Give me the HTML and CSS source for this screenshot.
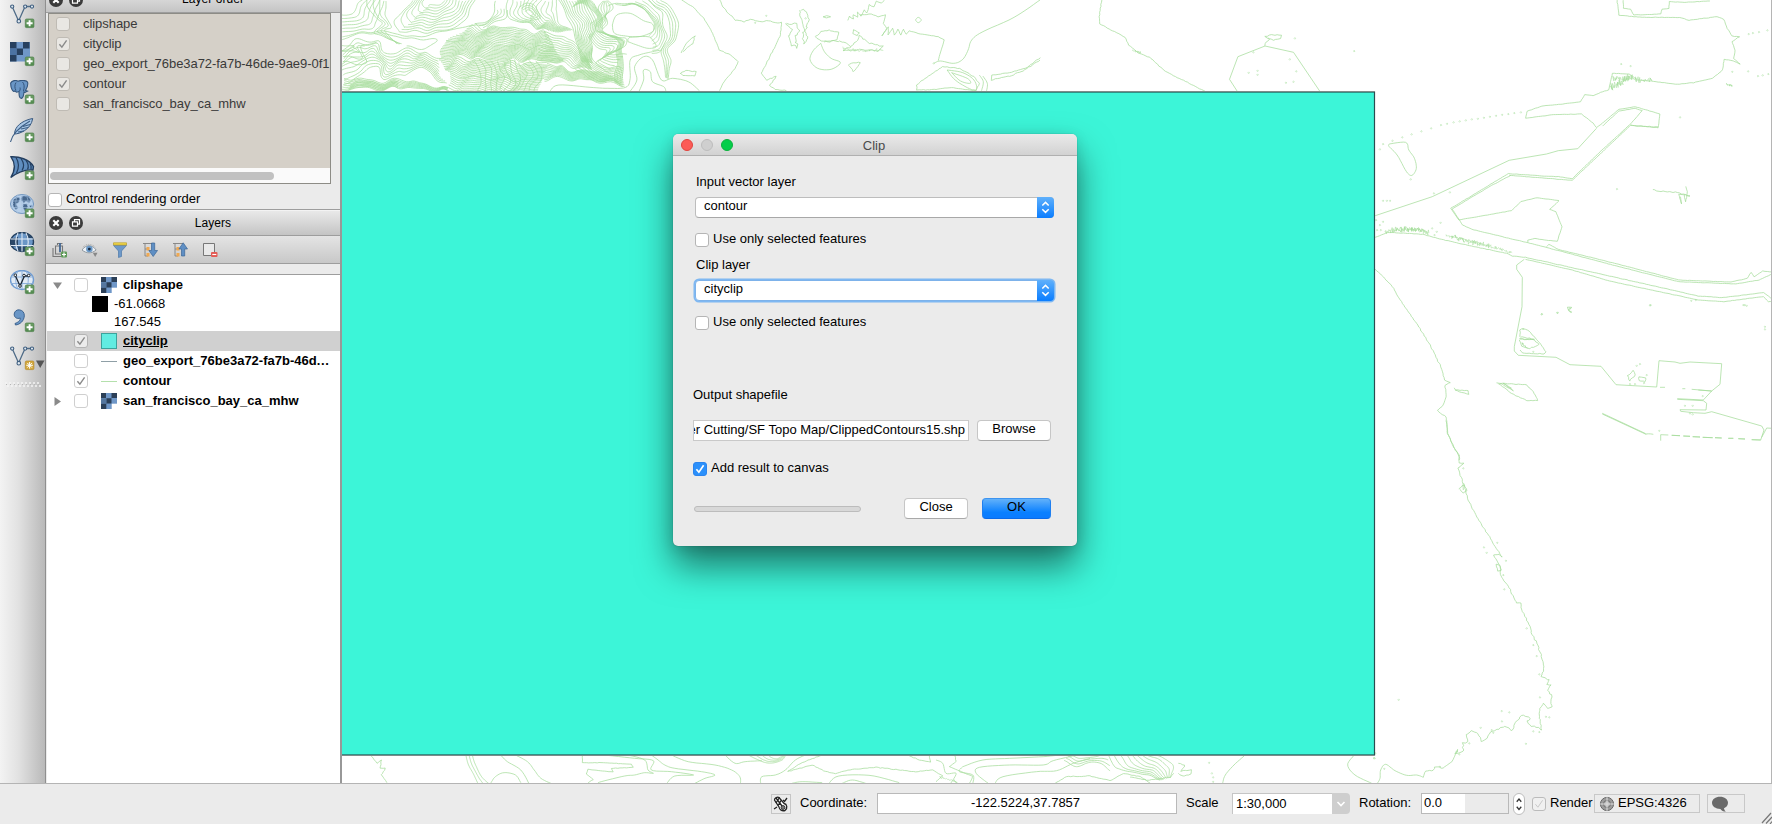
FILE: index.html
```html
<!DOCTYPE html>
<html lang="en">
<head>
<meta charset="utf-8">
<title>Clip</title>
<link rel="stylesheet" href="styles.css">
</head>
<body>
<svg class="defs" width="0" height="0">
  <defs>
    <linearGradient id="badgeGreen" x1="0" y1="0" x2="0" y2="1"><stop offset="0" stop-color="#6f9f68"/><stop offset="1" stop-color="#4f8a4c"/></linearGradient>
    <g id="plus"><rect x="15.3" y="15" width="8.6" height="8.6" rx="1.2" fill="url(#badgeGreen)" stroke="#4d7f4a" stroke-width=".7"/><path d="M19.6 16.3v6M16.6 19.3h6" stroke="#fff" stroke-width="1.9"/></g>
    <g id="vee"><path d="M2.6 3.6 8.6 17 14.6 3.6M15.5 2.5h5" fill="none" stroke="#4f6b87" stroke-width="1.3"/><g fill="#dfe8f0" stroke="#3f5f80" stroke-width="1.1"><circle cx="2.2" cy="2.6" r="1.6"/><circle cx="8.8" cy="17.2" r="1.8"/><circle cx="15.2" cy="2.6" r="1.6"/><circle cx="22" cy="2.6" r="1.6"/></g></g>
    <g id="raster"><path fill="#6f97c8" d="M0 0h16v16H0z"/><path fill="#2b3f57" d="M0 0h5v5H0zM10.500 0H16v5h-5.500zM5.300 5.300h5.200v5.200H5.300zM0 10.500h5.300V16H0z"/><path fill="#55779f" d="M0 5.300h5.300v5.200H0z"/><path fill="#fff" d="M10.700 10.700H16V16h-5.300z"/></g>
    <g id="tick"><path d="M3.400 7.200 5.900 10.200 10.600 3.300" fill="none"/></g>
    <g id="closeDock"><circle cx="7" cy="7" r="7" fill="#3b3b3b"/><path d="M4.300 4.300l5.400 5.400M9.700 4.300 4.300 9.700" stroke="#fff" stroke-width="2.100"/></g>
    <g id="floatDock"><circle cx="7" cy="7" r="7" fill="#3b3b3b"/><path d="M5.500 5.300V3.600h5v4.600H9M3.500 5.800h5v4.300h-5z" fill="none" stroke="#fff" stroke-width="1.200"/></g>
    <g id="updown"><path d="M5.300 8.500 8.500 5.400 11.700 8.500M5.300 12.300 8.500 15.400 11.700 12.300" fill="none" stroke="#fff" stroke-width="1.500"/></g>
  </defs>
</svg>

<div class="app">
  <div class="workspace">
    <nav class="toolbar">
      <svg class="tool" viewBox="0 0 25 25"><use href="#vee" x="0" y="0"/><use href="#plus"/></svg>
      <svg class="tool" viewBox="0 0 25 25"><path fill="#6f97c8" d="M0 0h20v19.500H0z"/><path fill="#27405f" d="M0 0h6.500v6.500H0zM13 0h6.500v6.500H13zM6.500 6.500H13V13H6.500zM0 13h6.500v6.500H0z"/><path fill="#4c73a3" d="M0 6.500h6.500V13H0z"/><use href="#plus"/></svg>
      <svg class="tool" viewBox="0 0 25 25"><path d="M.7 3C2 .2 6 0 8 1.200 11 0 16 0 17.500 2c1 3-.5 6-2 8.500l2 .7-2.500 1.200-1-.5c-.3 3-.5 6-2.500 6.500-2.500.2-2.500-4-2.500-7-1.500 1-3.500 1-4-.5C3 13 .5 8 .7 3z" fill="#6a96c6" stroke="#34557c" stroke-width="1.100"/><path d="M6 2.500C4.500 5 4.500 8 6 10.500M12.500 2c2 2 2 5 1 9M9 11.500c1-1 1.500-2 1-4" fill="none" stroke="#34557c" stroke-width="1"/><use href="#plus"/></svg>
      <svg class="tool" viewBox="0 0 25 25"><path d="M22.700.5C15 2 7 6 5 13l-.5 3C9 16 21 12 22.700.5z" fill="#a9c7e6" stroke="#34557c" stroke-width="1"/><path d="M.5 24C2 17 8 10 20 3M8 14l6-1M11 11l7-1.500M13 8.500l7-2" fill="none" stroke="#3d5f86" stroke-width="1.100"/><use href="#plus"/></svg>
      <svg class="tool" viewBox="0 0 25 25"><path d="M1 .8C9 .5 19 3 23.500 10.500L23 14C15 13 8 16 .8 21.500 5.500 14 5.500 7 1 .8z" fill="#5f8dbf" stroke="#243f60" stroke-width="1.400"/><path d="M6 1.500C9.500 7 9 12 6.500 17M11 2.500c3.500 5 3 9 1 12M16 4.500c3 4 2.500 7 1.500 9M20 7.500c1.500 2 1.500 4 1 6" fill="none" stroke="#243f60" stroke-width="1.200"/><use href="#plus"/></svg>
      <svg class="tool" viewBox="0 0 25 25"><ellipse cx="12" cy="10" rx="11.500" ry="9.500" fill="#b7cfe9" stroke="#6e93bd"/><path d="M3 6l4-3 3 1-1 4-3 2 2 4-2 2-3-4zM12 2l6 0 3 4-2 3-3-2-2 2-3-3zM13 10l4 0 1 3-3 4-2-3zM19 12l3-1-1 3z" fill="#47678c" stroke="#9bb8da" stroke-width="1" stroke-dasharray="1.500 1"/><path d="M12 .5v19M.8 7h22.500M1 13.500h22.500M8 1C5 6 5 14 8 19M16 1c3 5 3 13 0 18" fill="none" stroke="#a8c4e2" stroke-width=".6"/><use href="#plus"/></svg>
      <svg class="tool" viewBox="0 0 25 25"><ellipse cx="12" cy="10" rx="11.500" ry="9.500" fill="#6a96c6" stroke="#24405f" stroke-width="1.400"/><path d="M1.500 6.500 8 5v9.500H2A9 9 0 0 1 1.500 6.500zM8 14.500h9V19H8zM16 1.500c4 1 6 4 6 4.500h-5z" fill="#2a4768"/><path d="M12 .5v19M.8 7h22.500M1 13.500h22.500M8 1C5 6 5 14 8 19M16 1c3 5 3 13 0 18" fill="none" stroke="#dfe9f4" stroke-width="1.100"/><use href="#plus"/></svg>
      <svg class="tool" viewBox="0 0 25 25"><ellipse cx="12" cy="10" rx="11.500" ry="9.500" fill="#e2ebf5" stroke="#6f9bd0" stroke-width="1.400"/><path d="M12 .5v19M.8 7h22.500M1 13.500h22.500M8 1C5 6 5 14 8 19M16 1c3 5 3 13 0 18" fill="none" stroke="#86abd9" stroke-width=".9"/><path d="M5.500 6 10 16 14.500 6h4" fill="none" stroke="#1d2733" stroke-width="1.300"/><g fill="#fff" stroke="#1d2733"><circle cx="5.300" cy="5.200" r="1.300"/><circle cx="14" cy="5.500" r="1.300"/><circle cx="18.700" cy="5.500" r="1.300"/><circle cx="10" cy="16" r="1.300"/></g><use href="#plus"/></svg>
      <svg class="tool" viewBox="0 0 25 25"><path d="M5 15.500C9 14 10.500 12 10.300 10 6.500 11.500 4 9 4.200 6 4.500 3 7 1.500 9.500 1.900c3 .3 5 2.600 4.800 6C14 13 10 16.500 5.500 17z" fill="#6a96c6" stroke="#3d638f" stroke-width="1"/><use href="#plus"/></svg>
      <svg class="tool tool-menu" viewBox="0 0 35 25"><use href="#vee"/><rect x="15.300" y="15" width="8.600" height="8.600" rx="1.200" fill="#d3a83c" stroke="#b58a2a" stroke-width=".7"/><path d="M19.600 16v6.600M16.300 19.300h6.600M17.300 17l4.600 4.600M21.900 17l-4.600 4.600" stroke="#fff" stroke-width="1"/><path d="M26 14.500h8.500L30.200 22z" fill="#555"/></svg>
      <svg class="grip" viewBox="0 0 36 6"><path d="M0 1h36" stroke="#f4f4f4" stroke-width="1.500" stroke-dasharray="2 2"/><path d="M2 4h34" stroke="#f4f4f4" stroke-width="1.500" stroke-dasharray="2 2"/><path d="M1 2.500h35" stroke="#b8b8b8" stroke-width="1" stroke-dasharray="1 3"/></svg>
    </nav>

    <aside class="docks">
      <section class="dock order">
        <header class="dock-title dock-title-top">
          <svg class="dock-btn" viewBox="0 0 14 14"><use href="#closeDock"/></svg><svg class="dock-btn" viewBox="0 0 14 14"><use href="#floatDock"/></svg>
          <span class="dock-name">Layer order</span>
        </header>
        <div class="order-list">
          <div class="order-row"><i class="check dim"></i>clipshape</div>
          <div class="order-row"><i class="check dim"><svg viewBox="0 0 14 14"><use href="#tick"/></svg></i>cityclip</div>
          <div class="order-row"><i class="check dim"></i>geo_export_76be3a72-fa7b-46de-9ae9-0f1</div>
          <div class="order-row"><i class="check dim"><svg viewBox="0 0 14 14"><use href="#tick"/></svg></i>contour</div>
          <div class="order-row"><i class="check dim"></i>san_francisco_bay_ca_mhw</div>
          <div class="hscroll"><span class="thumb"></span></div>
        </div>
        <div class="control"><i class="check"></i>Control rendering order</div>
      </section>
      <section class="dock layers">
        <header class="dock-title">
          <svg class="dock-btn" viewBox="0 0 14 14"><use href="#closeDock"/></svg><svg class="dock-btn" viewBox="0 0 14 14"><use href="#floatDock"/></svg>
          <span class="dock-name">Layers</span>
        </header>
        <div class="layer-tools">
          <svg viewBox="0 0 16 16"><path d="M1 6v8.500h8M3.500 4v8h7V4zM5.500 3V1.500h5M8 10.500V1" fill="none" stroke="#777" stroke-width="1.100"/><path d="M8 10V1" stroke="#3d6698" stroke-width="1.600"/><rect x="9" y="9.500" width="6" height="6" rx="1" fill="#5f9a58"/><path d="M12 10.500v4M10 12.500h4" stroke="#fff" stroke-width="1.200"/></svg>
          <svg viewBox="0 0 17 16"><path d="M0 8C4 2 11 2 15 8 10 12 5 12 0 8z" fill="#eef2f6" stroke="#8b939b"/><circle cx="7.800" cy="7" r="3.500" fill="#6c9ac8"/><circle cx="7.800" cy="7" r="1.500" fill="#1b2d44"/><path d="M1 5c4-4 9-4 13 0" fill="none" stroke="#aaa" stroke-dasharray="1 1"/><path d="M11.500 11h5l-2.500 4.500z" fill="#888"/></svg>
          <svg viewBox="0 0 16 16"><path d="M1.500 3.500h13L9.500 9v5.500L6.500 15.500V9z" fill="#6d98c9" stroke="#4c78a8" stroke-width=".7"/><path d="M1.500.8h13v2.200h-13z" fill="#f2d94c" stroke="#b99c25" stroke-width=".7"/></svg>
          <svg viewBox="0 0 16 16"><path d="M1 1.500h10M3 2v12h3M3 7h3" fill="none" stroke="#888"/><path d="M4.500 5h3v3.500h-3zM4.500 11h3v3.500h-3z" fill="#f0a850"/><path d="M9.500 1h3.200v7.500h2.800L11.200 14.500 6.900 8.500h2.600z" fill="#5f8fc4" stroke="#3b6596" stroke-width=".7"/></svg>
          <svg viewBox="0 0 16 16"><path d="M1 1.500h10M3 2v12h3M3 7h3" fill="none" stroke="#888"/><path d="M4.500 5h3v3.500h-3zM4.500 11h3v3.500h-3z" fill="#f0a850"/><path d="M9.500 14h3.200V7h2.800L11.200.8 6.900 7h2.600z" fill="#5f8fc4" stroke="#3b6596" stroke-width=".7"/></svg>
          <svg viewBox="0 0 16 16"><path d="M1.500 1.500h11v12h-11z" fill="#e9e9e9" stroke="#777"/><rect x="9" y="10" width="6.500" height="5" rx="1" fill="#e35b55"/><path d="M10.300 12.500h4" stroke="#fff" stroke-width="1.100"/></svg>
        </div>
        <div class="strip"></div>
        <div class="tree">
          <div class="node"><svg class="arrow" viewBox="0 0 9 9"><path d="M0 1.500h9L4.500 8z"/></svg><i class="check pale"></i><svg class="sym" viewBox="0 0 16 16"><use href="#raster"/></svg><b>clipshape</b></div>
          <div class="leaf"><span class="swatch black"></span>-61.0668</div>
          <div class="leaf"><span class="swatch none"></span>167.545</div>
          <div class="node selected"><span class="arrow"></span><i class="check pale"><svg viewBox="0 0 14 14"><use href="#tick"/></svg></i><span class="sym fill"></span><b class="current">cityclip</b></div>
          <div class="node"><span class="arrow"></span><i class="check pale"></i><span class="sym line gray"></span><b>geo_export_76be3a72-fa7b-46d<span class="dots">...</span></b></div>
          <div class="node"><span class="arrow"></span><i class="check pale"><svg viewBox="0 0 14 14"><use href="#tick"/></svg></i><span class="sym line green"></span><b>contour</b></div>
          <div class="node"><svg class="arrow" viewBox="0 0 9 9"><path d="M1.500 0v9L8 4.500z"/></svg><i class="check pale"></i><svg class="sym" viewBox="0 0 16 16"><use href="#raster"/></svg><b>san_francisco_bay_ca_mhw</b></div>
        </div>
      </section>
    </aside>

    <main class="map">
      <svg class="canvas" viewBox="342 0 1429 783">
        <path id="shading" class="contour shading"/>
        <path id="contours" class="contour"/>
        <rect x="330" y="92" width="1044.500" height="663" class="city"/>
        <path d="M330 91.500H1375" class="edge-soft"/><path d="M330 755.500H1374" class="edge-soft"/>
      </svg>
    </main>
  </div>

  <footer class="status">
    <span class="toggle"><svg viewBox="0 0 18 18"><path d="M2.500 5c0-2 3-3.500 4.500-2.500l5 6c3 .5 4 4.500 1 7-3 .8-5.500-.5-6-3.500z" fill="#fff" stroke="#222" stroke-width="1.300"/><path d="M4 3l6 8M7.500 2.500 4 8M9.500 5 6 10.500M2 14l3-2M11 5l1.500 1.500L15 3" stroke="#222" stroke-width="1.300" fill="none"/><circle cx="11" cy="12.500" r="2" fill="#777" stroke="#222" stroke-width=".8"/></svg></span>
    <span class="lbl coord-lbl">Coordinate:</span>
    <span class="field coord">-122.5224,37.7857</span>
    <span class="lbl scale-lbl">Scale</span>
    <span class="scale"><span class="scale-val">1:30,000</span><span class="scale-btn"><svg viewBox="0 0 18 20"><path d="M5.500 9 9 12.500 12.500 9" fill="none" stroke="#fff" stroke-width="1.600"/></svg></span></span>
    <span class="lbl rot-lbl">Rotation:</span>
    <span class="field rot"><span>0.0</span><span class="rot-fill"></span></span>
    <span class="stepper"><svg viewBox="0 0 11 21"><path d="M3 8l2.500-3L8 8M3 13.500l2.500 3 2.500-3" fill="none" stroke="#333" stroke-width="1.400"/></svg></span>
    <i class="check faint"><svg viewBox="0 0 14 14"><use href="#tick"/></svg></i>
    <span class="lbl render-lbl">Render</span>
    <span class="crs"><svg viewBox="0 0 16 16"><circle cx="8" cy="8" r="6.600" fill="#9c9c9c" stroke="#666"/><circle cx="8" cy="8" r="3.500" fill="#bbb" stroke="#6b6b6b"/><path d="M8 .5v15M.5 8h15" stroke="#ddd" stroke-width="1"/></svg><span>EPSG:4326</span></span>
    <span class="msg"><svg viewBox="0 0 18 16"><path d="M9 .7c4.500 0 8 2.500 8 6.100 0 2.700-1.600 4.500-4 5.400.2 1.500.8 2.500 2 3.300-2.600 0-4.700-1-5.600-2.600C4.500 12.900 1 10.400 1 6.800S4.500.7 9 .7z" fill="#6a6a6a"/></svg></span>
    <svg class="sizegrip" viewBox="0 0 11 12"><path d="M1 11 10 1M5 11.500 11 5M9 12l2-2.500" stroke="#777" stroke-width="1.200"/></svg>
  </footer>
</div>

<div class="dialog">
  <header class="titlebar"><span class="lights"><i class="red"></i><i class="off"></i><i class="green"></i></span>Clip</header>
  <div class="form">
    <div class="label l-input">Input vector layer</div>
    <div class="combo"><span>contour</span><svg class="combo-btn" viewBox="0 0 17 21"><use href="#updown"/></svg></div>
    <div class="opt"><i class="check"></i>Use only selected features</div>
    <div class="label l-clip">Clip layer</div>
    <div class="combo focus"><span>cityclip</span><svg class="combo-btn" viewBox="0 0 17 21"><use href="#updown"/></svg></div>
    <div class="opt"><i class="check"></i>Use only selected features</div>
    <div class="label l-out">Output shapefile</div>
    <div class="file"><span class="path"><span>er Cutting/SF Topo Map/ClippedContours15.shp</span></span><span class="btn browse">Browse</span></div>
    <div class="opt add"><i class="check on"><svg viewBox="0 0 14 14"><use href="#tick"/></svg></i>Add result to canvas</div>
    <div class="actions"><span class="progress"></span><span class="btn close">Close</span><span class="btn ok">OK</span></div>
  </div>
</div>
<script src="contours.js"></script>
</body>
</html>
```

FILE: styles.css
```css
html, body { margin: 0; height: 100%; overflow: hidden; }
body { font: 13px/16px "Liberation Sans", Arial, sans-serif; color: #000; background: #ebebeb; }
.defs { position: absolute; }
.app { width: 1772px; height: 824px; display: flex; flex-direction: column; overflow: hidden; }
.workspace { height: 783px; display: flex; flex: none; }

.toolbar { box-sizing: border-box; width: 46px; padding: 4px 0 0 10px; background: linear-gradient(90deg, #f3f3f3, #e2e2e2 40%, #b9b9b9); border-right: 1px solid #8f8f8f; overflow: hidden; }
.tool { display: block; width: 25px; height: 25px; margin-bottom: 13px; }
.tool-menu { width: 35px; margin-bottom: 11px; }
.grip { display: block; width: 36px; height: 6px; margin-left: -5px; }

.docks { box-sizing: border-box; width: 296px; background: #ebebeb; border-right: 2px solid #989898; display: flex; flex-direction: column; }
.dock-title { box-sizing: border-box; display: flex; align-items: center; gap: 6px; height: 26px; padding: 0 3px; background: linear-gradient(#e9e9e9, #c4c4c4); border-top: 1px solid #f3f3f3; border-bottom: 1px solid #9d9d9d; font-size: 12px; }
.dock-title-top { margin-top: -13px; height: 26px; flex: none; }
.dock-title-top .dock-name { padding-bottom: 2px; }
.dock-btn { width: 14px; height: 14px; flex: none; margin-top: -1px; }
.dock-name { flex: 1; text-align: center; padding-bottom: 1px; letter-spacing: .05px; }

.order { height: 209px; border-bottom: 1px solid #9d9d9d; flex: none; }
.order-list { box-sizing: border-box; width: 283px; height: 171px; margin-left: 2px; border: 1px solid #8d8c86; background: #d5d0c8; display: flex; flex-direction: column; overflow: hidden; color: #3a3a3a; }
.order-row { display: flex; align-items: center; height: 20px; padding-left: 7px; white-space: nowrap; gap: 13px; letter-spacing: -.06px; }
.hscroll { margin-top: auto; height: 15px; background: #fafafa; display: flex; align-items: center; padding-left: 1px; }
.thumb { width: 224px; height: 8px; border-radius: 4px; background: #c1c1c1; }
.control { display: flex; gap: 4px; padding: 8px 0 0 2px; line-height: 14px; }
.control .check { margin-top: 1px; }

.check { box-sizing: border-box; display: block; width: 14px; height: 14px; flex: none; border: 1px solid #b5b5b5; border-radius: 3px; background: #fff; }
.check svg { display: block; width: 14px; height: 14px; margin: -1px; stroke: #8a8a8a; stroke-width: 1.400; }
.check.dim { background: #e9e7e3; border-color: #bfbbb4; }
.check.pale { border-color: #cfcfcf; background: #fff; }
.selected .check.pale { background: #ececec; border-color: #b4b4b4; }
.check.faint { background: #f0f0f0; border-color: #bbb; margin-left: -1px; }
.check.faint svg { stroke: #c9c9c9; stroke-width: 1; }
.check.on { background: #2b90fb; border-color: #2b84ee; }
.check.on svg { stroke: #fff; stroke-width: 1.700; }

.layers { flex: 1; display: flex; flex-direction: column; }
.layer-tools { box-sizing: border-box; height: 28px; flex: none; display: flex; align-items: center; gap: 14px; padding-left: 6px; background: linear-gradient(#e4e4e4, #c8c8c8); border-bottom: 1px solid #9d9d9d; }
.layer-tools svg { width: 16px; height: 16px; }
.strip { height: 10px; flex: none; border-bottom: 1px solid #9d9d9d; }
.tree { flex: 1; margin-left: 1px; background: #fff; }
.node { display: flex; align-items: center; height: 20px; padding-left: 6px; white-space: nowrap; }
.node.selected { background: #d0d0d0; }
.arrow { width: 9px; height: 9px; margin-right: 12px; fill: #8a8a8a; flex: none; }
.sym { width: 16px; height: 16px; margin: 0 6px 0 13px; flex: none; }
.sym.fill { box-sizing: border-box; background: #62ece1; border: 1px solid #3da39c; }
.sym.line { height: 1px; }
.gray { background: #8f9fa6; }
.green { background: #b4e0ac; }
.dots { letter-spacing: .7px; }
.current { text-decoration: underline; }
.leaf { display: flex; align-items: center; height: 18px; padding-left: 45px; gap: 6px; }
.swatch { width: 16px; height: 16px; }
.black { background: #000; }

.map { flex: 1; background: #fff; border-right: 1px solid #b5b5b5; overflow: hidden; }
.canvas { display: block; width: 1429px; height: 783px; }
.contour { fill: none; stroke: #a5dc9b; stroke-width: .75; }
.shading { stroke-width: .5; }
.city { fill: #3cf5d8; stroke: #2a4d50; stroke-width: 1.200; }
.edge-soft { stroke: #7f8a88; stroke-width: 1; fill: none; }

.status { box-sizing: border-box; height: 41px; border-top: 1px solid #b4b4b4; background: #ebebeb; display: flex; align-items: center; padding: 0 0 1px 771px; white-space: nowrap; }
.lbl { line-height: 15px; margin-top: -3px; }
.toggle { box-sizing: border-box; width: 20px; height: 20px; border: 1px solid #c5c5c5; margin-right: 9px; }
.toggle svg { width: 18px; height: 18px; display: block; }
.coord-lbl { width: 77px; }
.field { box-sizing: border-box; background: #fff; border: 1px solid #b9b9b9; height: 21px; line-height: 17px; }
.coord { width: 300px; text-align: center; padding-right: 3px; margin-right: 9px; }
.scale-lbl { width: 46px; }
.scale { display: flex; width: 118px; height: 21px; margin-right: 9px; }
.scale-val { box-sizing: border-box; width: 100px; background: #fff; border: 1px solid #c5c5c5; border-width: 1px 0 0 1px; padding-left: 3px; line-height: 19px; }
.scale-btn { width: 18px; background: #cecece; border-radius: 0 4px 4px 0; }
.scale-btn svg { width: 18px; height: 20px; display: block; }
.rot-lbl { width: 62px; }
.rot { width: 88px; padding-left: 2px; display: flex; justify-content: space-between; margin-right: 4px; }
.rot-fill { width: 43px; background: #ebebeb; }
.stepper { box-sizing: border-box; width: 12px; height: 22px; border: 1px solid #bdbdbd; border-radius: 6px; background: #fff; margin-right: 8px; }
.stepper svg { width: 10px; height: 20px; display: block; }
.render-lbl { width: 44px; padding-left: 4px; }
.crs { box-sizing: border-box; width: 106px; height: 19px; border: 1px solid #c8c8c8; display: flex; align-items: center; gap: 3px; padding-left: 4px; line-height: 15px; margin-right: 7px; }
.crs span { padding-bottom: 2px; }
.crs svg { width: 16px; height: 16px; }
.msg { box-sizing: border-box; width: 38px; height: 19px; border: 1px solid #c8c8c8; padding: 1px 0 0 3px; }
.msg svg { width: 18px; height: 16px; display: block; }
.sizegrip { width: 11px; height: 12px; margin: 0 0 -1px auto; align-self: flex-end; }

.dialog { position: absolute; left: 673px; top: 134px; width: 404px; height: 412px; border-radius: 6px 6px 5px 5px; background: #ebebeb; box-shadow: 0 0 1px rgba(0,0,0,.5), 0 20px 36px rgba(0,0,0,.52), 0 3px 14px rgba(0,0,0,.12); }
.titlebar { box-sizing: border-box; height: 22px; border-radius: 5px 5px 0 0; background: linear-gradient(#eaeaea, #d2d2d2); border-bottom: 1px solid #b0b0b0; text-align: center; line-height: 23px; color: #4a4a4a; position: relative; padding-right: 2px; }
.lights { position: absolute; left: 8px; top: 5px; display: flex; gap: 8px; }
.lights i { box-sizing: border-box; width: 12px; height: 12px; border-radius: 6px; border: 1px solid; }
.lights .red { background: #fc5b57; border-color: #e0443e; }
.lights .off { background: #cfcfcf; border-color: #bdbdbd; }
.lights .green { background: #05ce4a; border-color: #0bb13c; }
.form { padding: 18px 23px 0 20px; }
.label { height: 16px; line-height: 16px; }
.l-input { padding-left: 3px; }
.l-clip { padding-left: 3px; margin-top: 9px; }
.l-out { margin-top: 56px; }
.combo { box-sizing: border-box; display: flex; justify-content: space-between; margin: 7px 0 0 2px; width: 359px; height: 21px; background: #fff; border: 1px solid #bdbdbd; border-bottom-color: #a8a8a8; border-radius: 4px; line-height: 15px; padding-left: 8px; }
.combo-btn { width: 17px; height: 21px; margin: -1px; background: linear-gradient(#5fb0fb, #0a7dff); border-radius: 0 4px 4px 0; flex: none; }
.combo.focus { border-color: #7db2ea; box-shadow: 0 0 0 1.500px #7fb8f2; }
.opt { display: flex; gap: 4px; margin-top: 14px; padding-left: 2px; height: 16px; line-height: 14px; }
.opt .check { margin-top: 1px; }
.file { display: flex; gap: 8px; margin-top: 17px; }
.path { box-sizing: border-box; width: 276px; height: 21px; border: 1px solid #c9c9c9; background: #fff; overflow: hidden; display: flex; justify-content: flex-end; line-height: 18px; padding-right: 3px; overflow: clip; white-space: nowrap; }
.btn { box-sizing: border-box; height: 21px; border: 1px solid #c6c6c6; border-bottom-color: #a9a9a9; border-radius: 4px; background: #fff; text-align: center; line-height: 16px; }
.browse { width: 74px; }
.opt.add { padding-left: 0; margin-top: 19px; line-height: 16px; }
.opt.add .check { margin-top: 2px; }
.actions { display: flex; align-items: center; margin-top: 22px; }
.progress { box-sizing: border-box; width: 167px; height: 6px; border: 1px solid #bcbcbc; border-radius: 3px; background: #d8d8d8; margin: 0 43px 0 1px; }
.close { width: 64px; margin-right: 14px; }
.ok { width: 69px; background: linear-gradient(#62b1fa, #0a80ff 70%, #0a7bff); border-color: #3d94f0 #1f7ff0 #0a6ae8; }
```

FILE: contours.js
```js
const frames = {
  T: [340, 0, 2.24, 3], R: [1040, 0, 2.142, 3], E: [1340, 200, 3, 3],
  S: [1340, 420, 3, 3], B: [340, 740, 1.4933, 3]
};
let seed = 7;
const rnd = () => (seed = (seed * 16807) % 2147483647) / 2147483647 - 0.5;
const pts = s => s.trim().split(/\s+/).map(p => p.split(',').map(Number));
const out = [], shade = [];
const emit = (a, to = out) => to.push('M' + a.map(p => p[0].toFixed(1) + ' ' + p[1].toFixed(1)).join('L'));
const place = (f, p) => { const k = frames[f]; return [k[0] + p[0] / k[2], k[1] + p[1] / k[3]]; };

// Catmull-Rom resampling.
function curve(a, n) {
  const r = [];
  for (let i = 0; i < a.length - 1; i++) {
    const p0 = a[Math.max(0, i - 1)], p1 = a[i], p2 = a[i + 1], p3 = a[Math.min(a.length - 1, i + 2)];
    for (let j = 0; j < n; j++) {
      const t = j / n, q = c => 0.5 * (2 * p1[c] + (p2[c] - p0[c]) * t + (2 * p0[c] - 5 * p1[c] + 4 * p2[c] - p3[c]) * t * t + (3 * p1[c] - p0[c] - 3 * p2[c] + p3[c]) * t * t * t);
      r.push([q(0), q(1)]);
    }
  }
  r.push(a[a.length - 1]);
  return r;
}
// Polyline with optional shore roughness in pixels.
function line(f, s, rough = 0) {
  const a = pts(s).map(p => place(f, p));
  if (!rough) return emit(a);
  const r = [];
  for (let i = 0; i < a.length - 1; i++) {
    const [x, y] = a[i], [u, v] = a[i + 1], n = Math.max(1, Math.round(Math.hypot(u - x, v - y) / 2.2));
    for (let j = 0; j < n; j++) r.push([x + (u - x) * j / n + rnd() * rough, y + (v - y) * j / n + rnd() * rough]);
  }
  r.push(a[a.length - 1]);
  emit(r);
}
const smooth = (f, s) => emit(curve(pts(s).map(p => place(f, p)), 6));
const warp = (p, w) => [
  p[0] + w * (Math.sin(p[1] / 4.1 + p[0] / 9) + 0.7 * Math.sin(p[0] / 5.3 - p[1] / 3.2)),
  p[1] + w * (Math.sin(p[0] / 4.3 + p[1] / 11) + 0.7 * Math.sin(p[0] / 2.9 + p[1] / 6))
];
// Family of n contours blended between two guide lines.
function family(f, s1, s2, n, w = 0.9) {
  const a = pts(s1), b = pts(s2);
  for (let i = 0; i < n; i++) {
    const t = n === 1 ? 0 : i / (n - 1);
    emit(curve(a.map((p, k) => place(f, [p[0] + (b[k][0] - p[0]) * t, p[1] + (b[k][1] - p[1]) * t])), 12).map(p => warp(p, w)));
  }
}
function specks(f, s) { pts(s).forEach(p => { const [x, y] = place(f, p); emit([[x - .8, y], [x, y - .8], [x + .8, y + .3], [x - .3, y + .8], [x - .8, y]], shade); }); }
function hatch(f, s, h) {
  const a = curve(pts(s).map(p => place(f, p)), 7), r = [];
  a.forEach(p => { r.push([p[0] + rnd() * 2, p[1] - h * (0.3 + rnd() * .8)]); r.push([p[0] + 1 + rnd() * 2, p[1] + h * (0.25 + rnd() * .6)]); });
  emit(r, shade);
}

// North-west hills
family('T', '5,45 30,40 40,10 50,0', '5,95 70,85 80,60 100,0', 6, .6);
family('T', '105,0 100,40 115,80 100,95 130,130', '60,0 70,40 95,70 80,100 140,130', 4, .7);
family('T', '130,95 165,95 230,92 280,60 300,0', '200,20 205,15 215,12 225,10 235,0', 11, .9);
family('T', '130,95 125,60 150,20 160,0', '200,30 190,25 185,10 190,0', 6, .9);
family('T', '5,110 50,98 100,95 170,110 260,85 330,65 350,0', '5,118 45,102 90,100 150,115 215,120 190,145 150,140', 2, .6);
family('T', '5,150 40,122 80,125 105,160 140,150 180,155 215,175', '5,255 40,225 80,200 105,235 140,225 180,205 235,255', 10, 1.3);
family('T', '5,135 30,140 20,148 5,150', '5,185 60,190 45,140 80,128', 4, .6);
family('T', '5,240 40,235 90,245 140,240 200,255 240,268', '5,272 40,262 90,268 140,262 200,270 240,274', 7, 1.2);
family('T', '20,250 50,244 90,250 130,248', '20,268 55,262 90,265 130,262', 5, 1.2);
family('T', '300,75 330,85 380,80 420,95 460,95', '235,120 290,125 350,130 410,140 480,140', 12, 1.3);
family('T', '235,122 290,128 350,134 410,142 480,142', '225,172 290,170 350,180 410,180 500,185', 12, 1.4);
family('T', '350,30 345,50 300,75', '375,30 370,55 330,80', 4, .9);
family('T', '375,0 372,30 390,60 430,75 470,95', '490,0 480,30 490,55 500,75 520,90', 13, 1.3);
family('T', '400,20 420,10 440,20 445,50 425,65', '415,35 422,30 430,35 432,45 425,50', 4, .9);
family('T', '215,175 290,178 350,185 410,190 460,195', '250,225 300,230 350,235 410,240 460,232', 11, 1.4);
family('T', '250,230 300,232 360,238 420,242 455,235', '235,274 300,272 350,276 420,276 445,270', 8, 1.4);
family('T', '300,180 310,210 318,240 310,274', '440,185 450,205 452,235 435,274', 12, 1.3);
family('T', '490,0 505,40 520,80 530,130 545,190', '550,0 565,40 575,75 562,130 568,190', 12, 1);
family('T', '460,100 500,110 525,130 540,150 560,185', '440,190 470,185 500,190 530,200 560,210', 13, 1.3);
family('T', '460,190 490,200 520,210 555,215 590,215', '460,240 500,235 530,240 570,240 630,252', 11, 1.3);
family('T', '560,150 570,180 590,200 635,205', '530,205 545,225 580,245 635,255', 10, 1.1);
family('T', '520,20 540,10 560,25 575,50 560,70', '530,0 550,0 570,10 585,50 590,90', 7, .6);
family('T', '575,90 590,110 640,115 640,140 600,160 640,165', '560,100 570,140 600,150 590,170 575,190 600,215', 7, .8);
family('T', '590,0 580,30 600,70 590,95 620,110 640,125 630,150 635,200 630,250', '600,0 610,30 580,60 575,95 600,105 625,125 620,150 620,200 615,250', 6, .7);
family('T', '600,20 640,8 680,25 700,60 705,90 695,110', '690,0 715,30 725,70 730,110 720,150 700,160', 7, .8);
family('T', '690,0 720,30 740,70 735,120 720,150 725,185 730,235', '720,0 745,30 758,70 750,120 735,150 740,190 735,240', 4, .6);
smooth('T', '610,75 620,45 650,40 680,62 700,72 700,95 670,110 640,108 615,100 610,75');
smooth('T', '645,125 650,112 690,110 700,120 708,140 690,145 665,135 645,125');
smooth('T', '470,274 490,255 560,262 600,265 640,262 650,235 650,180 670,165 700,155 720,150');
smooth('T', '650,274 665,240 660,200 680,170 700,180 720,240 745,235 780,245 805,272');
smooth('T', '670,274 680,240 680,210 695,215 700,245 725,260 730,274');
line('T', '765,158 775,130 795,107 790,130 768,155', .9);
line('T', '762,220 775,212 798,215 795,228 768,226 762,220', .9);

// Northern waterfront
line('T', '765,0 790,20 815,55 835,100 850,150 875,165 892,185 885,205 860,245 850,272', .5);
line('T', '850,0 858,20 870,40 885,60 905,65 920,58 940,65 960,62 980,70 990,68 985,110 970,150 955,190 943,220 955,240 977,230 962,258 975,268 1000,272', .9);
line('T', '1000,70 1012,90 1003,110 1010,135 1025,142 1018,115 1030,95 1022,70 1000,70', 2.4);
line('T', '1032,30 1042,30 1052,60 1045,85 1035,100 1040,130 1048,115 1035,75 1030,30', 2.2);
line('T', '1082,50 1090,47 1099,50 1090,54 1082,50', .5);
line('T', '1138,62 1140,48 1150,58 1150,44 1160,52 1160,38 1168,48 1175,30 1180,40 1185,15 1195,20 1200,5 1212,8 1220,0', 1.2);
line('T', '1165,45 1190,42 1205,50 1222,45 1217,70 1225,85 1214,108 1228,80 1228,105 1238,85 1242,105 1250,88 1256,105 1262,88 1268,103 1275,92 1300,102 1340,110 1353,120 1347,150 1340,182', .4);
smooth('T', '1330,190 1345,183 1375,190 1395,178 1407,150 1415,120 1440,95 1510,52 1568,0');
smooth('T', '1289,60 1295,52 1302,60 1295,68 1289,60');
line('T', '1065,110 1078,95 1095,90 1117,96 1113,118 1097,126 1078,122 1065,110', 1);
line('T', '1085,125 1120,123 1145,137 1160,122 1165,107 1173,115 1185,130 1215,140 1205,152 1160,148 1128,152 1145,140', 1.8);
hatch('T', '1125,145 1160,152 1215,150', 3);
smooth('T', '1077,130 1060,152 1053,180 1070,205 1100,208 1121,188 1100,175 1085,155 1077,130');
line('T', '1150,215 1138,195 1150,187 1166,188 1160,200 1150,215', .9);
line('T', '1150,90 1163,98 1158,108 1148,100 1150,90', 1);
line('T', '1292,270 1292,255 1310,235 1350,200 1388,205 1420,230 1432,250 1425,272 1400,268 1370,262 1340,268 1292,270', .7);
smooth('T', '1360,210 1378,240 1410,266 1426,268 1420,240 1395,218 1360,210');
smooth('T', '1370,218 1390,243 1412,250 1405,235 1370,218');
smooth('T', '1432,225 1441,245 1437,272');
smooth('T', '1440,228 1450,250 1448,274');
line('T', '1568,174 1535,205 1500,218 1460,225 1459,240 1500,228 1530,212 1568,180', 1);
specks('T', '955,47 930,68 1043,55 1330,190');

// Eastern shore
line('R', '132,0 127,50 128,72 160,95 182,112 190,135 210,158 235,172 265,210 290,230 320,250 355,275', .6);
hatch('R', '198,150 213,158', 2);
line('R', '423,275 406,238 424,170 482,138 543,157 600,275');
line('R', '482,138 484,125 492,118 482,110 495,104 517,106 515,115 500,121 488,114', .7);
specks('R', '546,115 673,153 535,178 549,214 447,218 466,212 466,224 527,248 543,245 457,157 1236,567 1371,352 1477,255 1483,215 1517,214 728,448 844,580 878,577 858,668 794,538 1075,942 1108,938 1308,915 1035,987 1245,192 1265,198');
hatch('R', '1470,252 1482,258', 2);
line('R', '1134,935 1130,922 1139,922 1132,930 1139,938', .5);
line('R', '1236,0 1240,46 1290,52 1370,52 1390,61 1450,50 1465,58 1472,85 1482,108 1498,110 1482,125 1489,150 1486,175 1500,193 1485,182 1465,178 1462,210 1440,235 1400,248 1365,253 1310,243 1280,240', .5);
line('R', '1249,0 1250,25 1265,28 1272,45 1330,42 1332,28 1347,25 1348,5 1380,7 1435,3', .4);
line('R', '1280,240 1262,222 1226,220 1222,245 1218,270 1205,275 1185,287 1167,284 1158,305 1120,312 1075,318 1043,334 1040,355 1100,344 1160,342 1185,370 1192,383 1200,375 1240,328 1275,320 1328,342 1324,383 1265,376 1140,541 1005,526', .3);
hatch('R', '1228,235 1245,238 1262,232 1280,240 1308,240', 5);
hatch('R', '1222,262 1235,256 1248,245 1262,232', 6);
line('R', '1192,385 1152,446 1110,452 1085,462 1005,481 840,590 718,647');
line('R', '1205,378 1240,333 1275,325 1290,332 1265,372 1200,455 1140,536 1110,530 1075,528 1040,524 1003,521 880,625 897,660 1010,632 1030,605 1065,593 1112,602 1092,628 1105,635 1118,680 1108,724 1080,720 1060,715 1045,720 1045,727', .3);
line('R', '1008,526 960,562 883,627 905,675 925,688 1050,730 1100,748 1240,800 1368,845 1490,852 1540,840 1568,822', .3);
line('R', '1085,740 1090,733 1110,748 1240,793 1368,840 1480,846 1515,835 1523,817 1530,830 1548,813 1568,816', .3);
line('R', '718,712 745,697 820,703 860,718 920,737 1000,760 1012,768 1040,772 1220,828 1410,888 1460,893 1550,878 1568,897', .4);
line('R', '1040,778 1140,810 1220,843 1410,900 1465,905 1520,895 1550,890 1560,905 1568,905', .3);
hatch('R', '740,695 760,690 780,690 800,690 830,700', 4.500);
hatch('R', '755,692 785,686 800,688 815,690 830,698', 4);
hatch('R', '868,706 900,716 930,726 960,738 985,748 1008,758', 2.500);
hatch('R', '880,710 900,718 920,727 940,732 960,738', 4.500);
line('R', '1265,376 1324,381', 1);
specks('R', '720,660 728,675 735,665 722,690 730,690 840,685 850,695 845,705 1395,902 1405,900 1510,915 735,602 743,602 750,602');
specks('R', '735,432 755,422 776,412 796,403 817,394 838,385 859,375 872,371 886,367 899,364 912,361 925,358 938,356 951,353 964,350 977,347 990,344 1003,342 1016,339 1030,337 1518,102 1527,99 1540,96 1558,91 1538,228 1548,226 1560,222');
smooth('R', '748,432 783,427 790,450 802,475 806,505 797,526 785,515 765,465 748,440 748,432');
line('R', '1312,569 1330,574 1360,577 1392,588 1375,583 1368,583', 1);
line('R', '1383,560 1387,575 1383,605 1380,585', .5);
line('R', '1368,583 1374,612 1372,590', .4);

// Harbour
line('E', '553,178 530,195 530,208 547,232 546,320 523,440 523,453 535,466 648,472 690,494 783,499 828,554 950,561 957,482 1005,486 1020,490 1050,486 1145,491 1140,553 1115,573 1090,600 1012,596');
line('E', '960,562 975,562'); line('E', '1027,566 1036,566'); line('E', '1055,568 1115,573 1075,570');
line('E', '1012,598 1090,602 1100,610 1098,630 1020,629 1022,634 1060,638 1095,640 1115,635 1265,678 1272,690 1262,720');
line('E', '1296,685 1280,684 1265,712');
line('E', '787,640 915,700 918,703 787,642'); line('E', '918,703 940,703', 1); line('E', '962,722 962,704 985,705');
for (const s of ['995,706 1020,707', '1030,708 1050,709', '1058,710 1080,711', '1088,712 1118,713', '1125,713 1145,714', '1165,715 1180,715', '1195,716 1215,717', '1235,719 1262,720']) { line('E', s); line('E', s); }
line('E', '540,410 540,390 550,385 568,393 590,418 618,455 612,462 548,459 540,450', .8);
line('E', '540,410 582,418 540,418 582,420 598,434 570,445 545,440 538,420', 1.2);
hatch('E', '545,430 560,445', 3);
line('E', '470,549 560,554 580,575 593,602 560,601 535,590 515,580 475,551', .8);
line('E', '480,550 520,572 490,550 515,565', .8);
line('E', '343,563 347,570 385,572 386,583 365,577 345,570', .6);
line('E', '863,527 880,512 886,525 868,543 863,527', 1);
line('E', '897,530 918,534 915,545 898,542 897,530', 1.200);
specks('E', '605,343 653,338 690,325 692,335 930,316 900,492 890,497 920,525 870,552 885,552 912,549 1275,380 1275,388 1058,617 1035,617 1088,588 1050,640 1058,643 1210,315 1220,317 958,692 580,455');
line('E', '105,208 130,230 160,265 180,300 230,370 270,435 300,495 315,540 332,547 315,555 318,590 310,615 292,632 318,650 323,700 340,740 358,770 358,780', .9);

// Point and tidal flats
line('S', '320,0 323,40 340,80 358,105 357,130 372,128 355,145 368,185 370,210', 1.1);
line('S', '358,205 372,195 380,212 368,218 360,208', 1.5);
line('S', '370,190 385,240 410,290 445,345 468,385 487,412 478,404 460,405 475,430', .8);
line('S', '475,430 485,450 472,455 470,432 482,440 480,462 510,510 530,550 542,550 545,570 570,620 575,640 590,670 605,710 612,740 605,770 628,780 620,795 635,795 622,810 634,825 635,862 622,865 610,850 598,870 600,900 605,930', 1.4);
line('S', '605,930 590,920 575,920 560,905 570,895 545,885 525,910 515,932 495,918 470,930 450,935 440,955 425,965 415,940 395,932 380,945 382,965 368,970 370,995 345,1000 355,990 335,1025 310,1045 285,1040 280,1052 255,1052 250,1072', 1.500);
smooth('S', '250,1072 230,1065 200,1066 165,1052 137,1033 122,1050 120,1075 112,1090');
smooth('S', '40,1008 23,1035 45,1065 95,1090');
specks('S', '432,382 440,398 472,368 498,422 490,465 493,508 560,625 580,675 590,708 598,763 600,832 618,890 628,892 580,934 598,936 558,971 508,877 485,873 486,904 422,923 455,930 460,938 350,995 358,1003 300,1040 133,1046 102,1014 106,1000 176,839 370,145 388,970');

// Southern margin
line('B', '45,45 55,70 62,60 60,85 68,85 62,105 70,128', .8);
family('B', '188,45 192,75 200,105 206,130', '198,45 202,75 210,105 222,130', 3, .2);
smooth('B', '240,45 250,65 270,90 282,130'); smooth('B', '262,45 280,65 290,90 300,115 315,130');
smooth('B', '225,130 232,110 245,98 262,105 270,128');
smooth('B', '430,45 455,60 460,90 468,100 455,98 440,105 425,108 390,125 385,130');
line('B', '362,45 362,68 390,68 435,72 438,82 405,85 408,96 370,88 368,102 378,118 370,130', .5);
smooth('B', '395,45 440,55 468,62 465,90 495,95 528,105 500,108 488,130');
smooth('B', '465,45 475,60 485,75 500,85 540,95 560,105 545,115 530,130');
smooth('B', '495,45 520,65 560,75 585,90 597,110 598,130');
smooth('B', '575,45 590,70 605,65 630,62');
family('B', '610,45 625,60 645,70 660,60 665,45', '640,45 646,55 652,58 658,52 660,45', 4, .3);
smooth('B', '628,130 630,110 650,105 665,90 680,60 695,45');
line('B', '720,45 690,68 668,95 705,75 725,95 740,100 765,88 800,82 860,95 885,90 900,108 890,125', .7);
smooth('B', '675,130 690,125 720,128'); smooth('B', '730,130 745,108 790,106 830,125 835,130'); smooth('B', '750,130 765,120 785,130');
line('B', '848,45 865,60 882,67 880,45', .6);
smooth('B', '890,60 900,70 905,100 920,100 912,130');
line('B', '918,45 920,65 910,80 928,95 945,110 940,130', .6);
hatch('B', '895,112 915,122 920,128', 2);
smooth('B', '930,80 960,60 1000,55 1050,50 1075,45'); smooth('B', '930,80 925,95 945,105 945,130');
smooth('B', '968,130 950,100 955,82 1000,75 1050,75 1065,62 1100,45');
smooth('B', '978,130 990,110 1040,95 1070,92 1095,70 1120,55');
line('B', '1068,130 1085,110 1120,108 1150,122 1170,100 1195,110 1210,130', .8);
family('B', '1080,60 1100,80 1125,65 1150,90', '1090,45 1105,55 1125,50 1145,45', 4, .5);
family('B', '1148,45 1160,85 1195,100 1225,118', '1215,45 1235,60 1245,85 1240,115', 9, .5);
line('B', '1180,110 1205,120 1240,112 1245,100', 1.2);
line('B', '1252,70 1262,75 1255,95 1272,88 1270,103 1258,108 1252,100', 1.500);
specks('B', '1302,100 1304,112 1304,125 1298,68 1545,55');
smooth('B', '1350,48 1335,75 1322,105 1318,130');

document.getElementById('contours').setAttribute('d', out.join(''));
document.getElementById('shading').setAttribute('d', shade.join(''));
```
